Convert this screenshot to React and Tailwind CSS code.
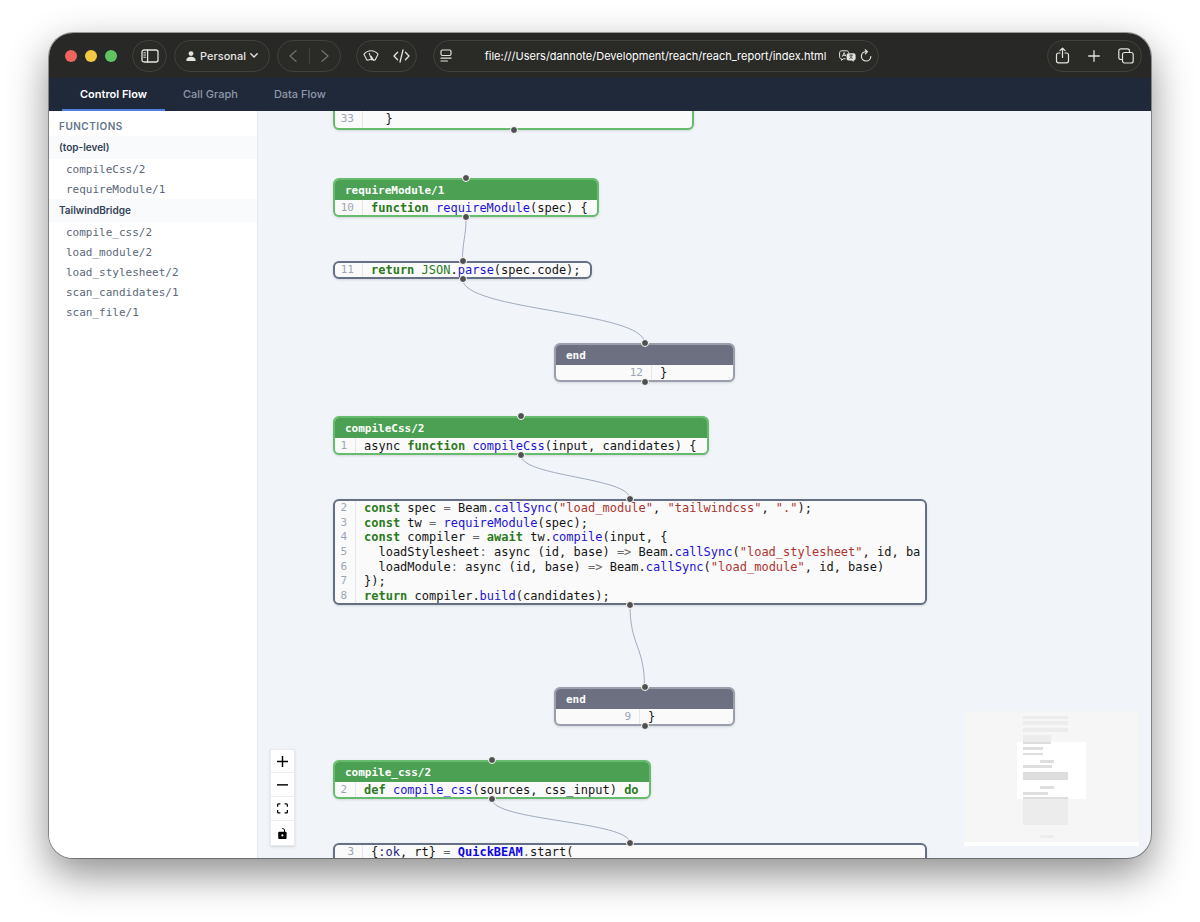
import { useState } from "react";

const TABS = ["Control Flow", "Call Graph", "Data Flow"];

const MODULES = [
  { name: "(top-level)", functions: ["compileCss/2", "requireModule/1"] },
  {
    name: "TailwindBridge",
    functions: ["compile_css/2", "load_module/2", "load_stylesheet/2", "scan_candidates/1", "scan_file/1"],
  },
];

// token kinds: k keyword, f function, t type, s string, o operator, m module, a atom
const TOKEN = {
  k: "font-bold text-[#2c7a1c]",
  f: "text-[#1c12d6]",
  t: "text-[#2c7a1c]",
  s: "text-[#ac3530]",
  o: "text-[#6b6b6b]",
  m: "font-bold text-[#0d06e6]",
  a: "text-[#26217a]",
};

const KIND = {
  entry: { border: "border-[#66bb6c]", header: "bg-[#4ca053]" },
  block: { border: "border-[#667085]", header: "" },
  exit: { border: "border-[#9a9fab]", header: "bg-[#6c7080]" },
};

const NODES = [
  { id: "n0", kind: "entry", x: 75, y: -40, w: 361, h: 59, gutter: "w-7", target: false, rows: "mt-auto h-[18px]",
    lines: [[33, ["", "  }"]]] },
  { id: "n1", kind: "entry", title: "requireModule/1", x: 75, y: 67, w: 266, h: 39, gutter: "w-7",
    lines: [[10, ["k", "function"], ["", " "], ["f", "requireModule"], ["", "(spec) {"]]] },
  { id: "n2", kind: "block", x: 75, y: 150, w: 259, h: 18, gutter: "w-7",
    lines: [[11, ["k", "return"], ["", " "], ["t", "JSON"], ["", "."], ["f", "parse"], ["", "(spec.code);"]]] },
  { id: "n3", kind: "exit", title: "end", x: 296, y: 232, w: 181, h: 39, gutter: "w-24",
    lines: [[12, ["", "}"]]] },
  { id: "n4", kind: "entry", title: "compileCss/2", x: 75, y: 305, w: 376, h: 39, gutter: "w-[21px]",
    lines: [[1, ["", "async "], ["k", "function"], ["", " "], ["f", "compileCss"], ["", "(input, candidates) {"]]] },
  { id: "n5", kind: "block", x: 75, y: 388, w: 594, h: 106, gutter: "w-[21px]",
    lines: [
      [2, ["k", "const"], ["", " spec "], ["o", "="], ["", " Beam."], ["f", "callSync"], ["", "("], ["s", '"load_module"'], ["", ", "], ["s", '"tailwindcss"'], ["", ", "], ["s", '"."'], ["", ");"]],
      [3, ["k", "const"], ["", " tw "], ["o", "="], ["", " "], ["f", "requireModule"], ["", "(spec);"]],
      [4, ["k", "const"], ["", " compiler "], ["o", "="], ["", " "], ["k", "await"], ["", " tw."], ["f", "compile"], ["", "(input, {"]],
      [5, ["", "  loadStylesheet"], ["o", ":"], ["", " async (id, base) "], ["o", "=>"], ["", " Beam."], ["f", "callSync"], ["", "("], ["s", '"load_stylesheet"'], ["", ", id, ba"]],
      [6, ["", "  loadModule"], ["o", ":"], ["", " async (id, base) "], ["o", "=>"], ["", " Beam."], ["f", "callSync"], ["", "("], ["s", '"load_module"'], ["", ", id, base)"]],
      [7, ["", "});"]],
      [8, ["k", "return"], ["", " compiler."], ["f", "build"], ["", "(candidates);"]],
    ] },
  { id: "n6", kind: "exit", title: "end", x: 296, y: 576, w: 181, h: 39, gutter: "w-[84px]",
    lines: [[9, ["", "}"]]] },
  { id: "n7", kind: "entry", title: "compile_css/2", x: 75, y: 649, w: 318, h: 39, gutter: "w-[21px]",
    lines: [[2, ["k", "def"], ["", " "], ["f", "compile_css"], ["", "(sources, css_input) "], ["k", "do"]]] },
  { id: "n8", kind: "block", x: 75, y: 732, w: 594, h: 60, gutter: "w-7", source: false, rows: "h-[14px]",
    lines: [[3, ["", "{"], ["a", ":ok"], ["", ", rt} "], ["o", "="], ["", " "], ["m", "QuickBEAM"], ["o", "."], ["", "start("]]] },
];

const EDGES = [["n1", "n2"], ["n2", "n3"], ["n4", "n5"], ["n5", "n6"], ["n7", "n8"]];

const MINIMAP = [
  [59, 5, 45, 3], [59, 10, 45, 4], [59, 17, 45, 4], [59, 24, 28, 9], [59, 36, 20, 3],
  [59, 42, 20, 2], [76, 49, 14, 3], [59, 54, 29, 3], [59, 61, 45, 8], [76, 75, 14, 3],
  [59, 81, 25, 3], [59, 86, 45, 28], [76, 124, 14, 3],
];

function edgePath([from, to]) {
  const a = NODES.find((n) => n.id === from);
  const b = NODES.find((n) => n.id === to);
  const x1 = a.x + a.w / 2;
  const y1 = a.y + a.h;
  const x2 = b.x + b.w / 2;
  const mid = (y1 + b.y) / 2;
  return `M${x1} ${y1}C${x1} ${mid} ${x2} ${mid} ${x2} ${b.y}`;
}

function Pill({ className, children }) {
  return (
    <div className={`flex h-8 shrink-0 items-center rounded-full border border-[#41413f] bg-[#2a2a27] ${className}`}>
      {children}
    </div>
  );
}

function Stroke({ className, viewBox, children, width = 1.3 }) {
  return (
    <svg className={className} viewBox={viewBox} fill="none" stroke="currentColor" strokeWidth={width} strokeLinecap="round" strokeLinejoin="round" aria-hidden="true">
      {children}
    </svg>
  );
}

function Toolbar() {
  return (
    <div className="flex h-[45px] shrink-0 items-center bg-[#282826] pr-[9px] pl-4 text-[#e3e3e1]">
      <div className="flex shrink-0 gap-2">
        <button aria-label="Close" className="size-3 rounded-full bg-[#ee6560]" />
        <button aria-label="Minimize" className="size-3 rounded-full bg-[#f3c843]" />
        <button aria-label="Zoom" className="size-3 rounded-full bg-[#5fc563]" />
      </div>

      <Pill className="ml-[15px] w-[35px] justify-center">
        <button aria-label="Show sidebar">
          <Stroke className="h-[14px] w-[18px]" viewBox="0 0 18 14">
            <rect x="1" y="1" width="16" height="12" rx="2" />
            <path d="M6.6 1v12" />
            <path d="M2.8 3.8h1.8M2.8 6h1.8M2.8 8.2h1.8" strokeWidth="1" />
          </Stroke>
        </button>
      </Pill>

      <Pill className="ml-[7px] w-24 justify-center">
        <button className="flex items-center text-[11px] font-medium">
          <svg className="mr-1 size-[10px]" viewBox="0 0 10 10" fill="currentColor" aria-hidden="true">
            <circle cx="5" cy="2.6" r="2.4" />
            <path d="M.3 9.2C.3 7 2.3 5.8 5 5.8S9.7 7 9.7 9.2c0 .5-.3.8-.8.8H1.1C.6 10 .3 9.7.3 9.2z" />
          </svg>
          <span className="pt-px">Personal</span>
          <Stroke className="ml-1 h-[5px] w-2" viewBox="0 0 8 5" width={1.4}>
            <path d="M.8.8 4 4 7.2.8" />
          </Stroke>
        </button>
      </Pill>

      <Pill className="ml-[7px] w-16 justify-between px-[11px] text-[#6f6f6d]">
        <button aria-label="Back">
          <Stroke className="h-3 w-2" viewBox="0 0 8 12"><path d="M7 .8 1 6l6 5.2" /></Stroke>
        </button>
        <span className="h-4 w-px bg-[#41413f]" />
        <button aria-label="Forward">
          <Stroke className="h-3 w-2" viewBox="0 0 8 12"><path d="m1 .8 6 5.2-6 5.2" /></Stroke>
        </button>
      </Pill>

      <Pill className="ml-[15px] w-[61px] justify-between px-1.5">
        <button aria-label="Clear page">
          <Stroke className="h-3 w-4" viewBox="0 0 16 12" width={1.1}>
            <path d="M1 4.2C3 1.8 5.4.8 8 .8s5 1 7 3.4l-2.6 5.3c-.3.6-.9.7-1.5.5-1.9-.6-3.9-.6-5.8 0-.6.2-1.2.1-1.5-.5z" />
            <path d="m6.2 3.4 2.6 6.4M8.2 6.4l2.4 3.8" />
          </Stroke>
        </button>
        <button aria-label="View source">
          <Stroke className="h-[14px] w-[17px]" viewBox="0 0 17 14">
            <path d="M4.6 3.2 1 7l3.6 3.8M12.4 3.2 16 7l-3.6 3.8M10 1 7 13" />
          </Stroke>
        </button>
      </Pill>

      <Pill className="ml-4 max-w-[446px] min-w-0 flex-1 shrink px-1.5">
        <button aria-label="Page settings">
          <Stroke className="h-[13px] w-3" viewBox="0 0 12 13" width={1.2}>
            <rect x="1" y="1" width="10" height="5.5" rx="1.5" />
            <path d="M1 9.2h10M1 12h6.5" />
          </Stroke>
        </button>
        <input
          aria-label="Address"
          defaultValue="file:///Users/dannote/Development/reach/reach_report/index.html"
          className="ml-5 min-w-0 flex-1 bg-transparent pt-px text-center text-[11px] text-white outline-none"
        />
        <button aria-label="Translate">
          <svg className="h-3 w-[17px]" viewBox="0 0 17 12" fill="none" stroke="currentColor" aria-hidden="true">
            <path d="M6.5 8.8H4.2L2.6 10.4V8.8C1.4 8.8.6 8 .6 6.8V2.8C.6 1.6 1.4.8 2.6.8h5c1.2 0 2 .8 2 2" strokeLinejoin="round" />
            <path d="m3.2 6.8 1.9-4.2L7 6.4M3.9 5.4h2.4" strokeWidth=".9" />
            <path d="M9.6 3.2h5c1.1 0 2 .8 2 2v3.2c0 1.2-.9 2-2 2v1.5l-1.7-1.5H9.6c-1.2 0-2-.8-2-2V5.2c0-1.2.8-2 2-2z" fill="currentColor" stroke="none" />
            <path d="M10.4 5.2h3.2M12 4.4v.8M13.2 5.4c-.4 1.5-1.4 2.5-2.8 3.2M10.9 6.2c.6 1.1 1.5 1.9 2.7 2.4" stroke="#2a2a27" strokeWidth=".8" />
          </svg>
        </button>
        <button aria-label="Reload" className="ml-1">
          <Stroke className="h-[13px] w-3" viewBox="0 0 12 13" width={1.2}>
            <path d="M6 2.6A4.7 4.7 0 1 0 10.8 7.5M5.2.8 7.4 2.7 5.4 4.9" />
          </Stroke>
        </button>
      </Pill>

      <Pill className="ml-auto w-[95px] justify-between px-[7px]">
        <button aria-label="Share">
          <Stroke className="h-[17px] w-[15px]" viewBox="0 0 15 17" width={1.2}>
            <path d="M5 6H3.5C2.3 6 1.5 6.8 1.5 8v5.8c0 1.2.8 2 2 2h8c1.2 0 2-.8 2-2V8c0-1.2-.8-2-2-2H10" />
            <path d="M7.5 10.5V1.2M4.9 3.6l2.6-2.5 2.6 2.5" />
          </Stroke>
        </button>
        <button aria-label="New tab">
          <Stroke className="size-3" viewBox="0 0 12 12"><path d="M6 .7v10.6M.7 6h10.6" /></Stroke>
        </button>
        <button aria-label="Tab overview">
          <Stroke className="size-4" viewBox="0 0 16 16" width={1.2}>
            <rect x="4.5" y="4.5" width="10.7" height="10.5" rx="2" />
            <path d="M4.5 11.5H3c-1.3 0-2.2-.8-2.2-2V3c0-1.3.9-2.2 2.2-2.2h6.5c1.2 0 2 .9 2 2.2v1.5" />
          </Stroke>
        </button>
      </Pill>
    </div>
  );
}

function Sidebar() {
  return (
    <nav className="w-[209px] shrink-0 border-r border-[#e2e8f0] bg-white">
      <h2 className="px-[10px] pt-2 pb-[2px] text-[10px] leading-[15px] font-semibold tracking-wider text-[#64748b]">
        FUNCTIONS
      </h2>
      {MODULES.map((mod) => (
        <section key={mod.name}>
          <h3 className="bg-[#f8fafc] px-[10px] text-[10px] leading-[23px] font-semibold text-[#334155]">{mod.name}</h3>
          {mod.functions.map((fn) => (
            <button key={fn} className="block w-full px-[17px] pt-px text-left font-['DejaVu_Sans_Mono',monospace] text-[11px] leading-[19px] text-[#5a6779]">
              {fn}
            </button>
          ))}
        </section>
      ))}
    </nav>
  );
}

function Handle({ className }) {
  return <span className={`absolute left-1/2 size-2 -translate-x-1/2 rounded-full border border-white bg-[#505050] ${className}`} />;
}

function CodeNode({ node }) {
  const kind = KIND[node.kind];
  return (
    <div className="absolute" style={{ left: node.x, top: node.y, width: node.w, height: node.h }}>
      <div className={`flex h-full flex-col overflow-hidden rounded-md border-2 bg-[#fafafa] shadow-sm ${kind.border}`}>
        {node.title && (
          <div className={`h-5 shrink-0 px-[10px] text-[11px] leading-[22px] font-bold text-white ${kind.header}`}>{node.title}</div>
        )}
        <div className={`flex shrink-0 flex-col ${node.rows ?? "grow basis-0"}`}>
          {node.lines.map(([num, ...tokens]) => (
            <div key={num} className="flex min-h-0 flex-1 items-center">
              <span className={`flex h-full shrink-0 items-center justify-end border-r border-[#e5e7eb] pr-2 text-[11px] leading-[14px] text-[#9ba6b5] ${node.gutter}`}>
                {num}
              </span>
              <code className="pl-2 font-['DejaVu_Sans_Mono',monospace] text-xs leading-[14px] whitespace-pre text-[#151515]">
                {tokens.map(([type, text], i) => (
                  <span key={i} className={TOKEN[type]}>{text}</span>
                ))}
              </code>
            </div>
          ))}
        </div>
      </div>
      {node.target !== false && <Handle className="-top-1" />}
      {node.source !== false && <Handle className="-bottom-1" />}
    </div>
  );
}

function Controls() {
  return (
    <div className="absolute bottom-3 left-3 flex w-[25px] flex-col divide-y divide-[#eeeeee] border border-[#e8eaee] bg-white shadow-sm">
      <button aria-label="Zoom in" className="flex h-[23px] items-center justify-center">
        <svg className="size-[11px]" viewBox="0 0 32 32"><path d="M32 18.133H18.133V32h-4.266V18.133H0v-4.266h13.867V0h4.266v13.867H32z" /></svg>
      </button>
      <button aria-label="Zoom out" className="flex h-6 items-center justify-center">
        <svg className="h-[2px] w-[11px]" viewBox="0 0 32 5"><path d="M0 0h32v4.2H0z" /></svg>
      </button>
      <button aria-label="Fit view" className="flex h-6 items-center justify-center">
        <svg className="size-[11px]" viewBox="0 0 32 30"><path d="M3.692 4.63c0-.53.4-.938.939-.938h5.215V0H4.708C2.13 0 0 2.054 0 4.63v5.216h3.692V4.631zM27.354 0h-5.2v3.692h5.17c.53 0 .984.4.984.939v5.215H32V4.631A4.624 4.624 0 0 0 27.354 0zm.954 24.83c0 .532-.4.94-.939.94h-5.215v3.768h5.215c2.577 0 4.631-2.13 4.631-4.707v-5.139h-3.692v5.139zm-23.677.94c-.531 0-.939-.4-.939-.94v-5.138H0v5.139c0 2.577 2.13 4.707 4.708 4.707h5.138V25.77H4.631z" /></svg>
      </button>
      <button aria-label="Toggle interactivity" className="flex h-6 items-center justify-center">
        <svg className="size-[11px]" viewBox="0 0 25 32"><path d="M21.333 10.667H19.81V7.619C19.81 3.429 16.38 0 12.19 0c-4.114 1.828-1.37 2.133.305 2.438 1.676.305 4.42 2.59 4.42 5.181v3.048H3.047A3.056 3.056 0 0 0 0 13.714v15.238A3.056 3.056 0 0 0 3.048 32h18.285a3.056 3.056 0 0 0 3.048-3.048V13.714a3.056 3.056 0 0 0-3.048-3.047zM12.19 24.533a3.056 3.056 0 0 1-3.047-3.047 3.056 3.056 0 0 1 3.047-3.048 3.056 3.056 0 0 1 3.048 3.048 3.056 3.056 0 0 1-3.048 3.047z" /></svg>
      </button>
    </div>
  );
}

function MiniMap() {
  return (
    <svg className="absolute right-3 bottom-3 h-[135px] w-[175px]" viewBox="0 0 175 135" aria-label="Mini map">
      <rect width="175" height="135" fill="#fff" />
      {MINIMAP.map(([x, y, w, h]) => (
        <rect key={y} x={x} y={y} width={w} height={h} fill="#dedede" />
      ))}
      <path d="M0 0h175v131H0zM53 31v57h69V31z" fill="#f2f2f2" fillOpacity=".7" fillRule="evenodd" />
    </svg>
  );
}

export default function App() {
  const [tab, setTab] = useState("Control Flow");

  return (
    <div className="flex h-screen min-h-[480px] bg-white px-[49px] pt-[33px] pb-16 font-[Inter,sans-serif]">
      <div className="flex min-w-0 flex-1 flex-col overflow-hidden rounded-3xl bg-[#f1f5fa] shadow-[0_0_0_1px_rgba(0,0,0,0.35),0_16px_40px_rgba(0,0,0,0.45)]">
        <Toolbar />

        <div className="flex h-[33px] shrink-0 bg-[#20293a] px-[13px]">
          {TABS.map((name) => (
            <button
              key={name}
              onClick={() => setTab(name)}
              className={`border-b-2 px-[18px] pt-0.5 text-[11px] ${
                tab === name ? "border-[#4f7fe0] font-semibold text-white" : "border-transparent font-medium text-[#8d98a9]"
              }`}
            >
              {name}
            </button>
          ))}
        </div>

        <div className="flex min-h-0 flex-1">
          <Sidebar />
          <main className="relative min-w-0 flex-1 overflow-hidden font-['DejaVu_Sans_Mono',monospace]">
            <svg className="absolute inset-0 h-full w-full" fill="none" stroke="#a0abbd">
              {EDGES.map((edge) => (
                <path key={edge[0]} d={edgePath(edge)} />
              ))}
            </svg>
            {NODES.map((node) => (
              <CodeNode key={node.id} node={node} />
            ))}
            <Controls />
            <MiniMap />
          </main>
        </div>
      </div>
    </div>
  );
}
